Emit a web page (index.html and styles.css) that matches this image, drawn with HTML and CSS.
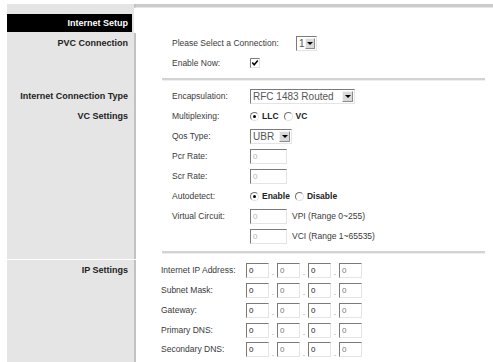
FILE: index.html
```html
<!DOCTYPE html>
<html lang="en">
<head>
  <meta charset="UTF-8">
  <title>Internet Setup</title>
  <link rel="stylesheet" href="styles.css">
</head>
<body>
  <div class="setup">
    <div class="row head">
      <div class="side"><div class="title-bar">Internet Setup</div></div>
      <div class="main top-line"></div>
    </div>

    <div class="row">
      <div class="side">PVC Connection</div>
      <div class="main">
        <span class="field wide">Please Select a Connection:</span>
        <span class="select sel-small"><span class="sel-text">1</span><span class="arrow"></span></span>
      </div>
    </div>
    <div class="row">
      <div class="side"></div>
      <div class="main">
        <span class="field">Enable Now:</span>
        <svg class="check" width="10" height="10" viewBox="0 0 10 10">
          <rect x="0.5" y="0.5" width="9" height="9" fill="#fff" stroke="#e2e2e2"/>
          <path d="M0.5 9.5 V0.5 H9.5" fill="none" stroke="#7a7a7a"/>
          <path d="M2.3 4.6 L4.2 6.8 L7.8 2.6" fill="none" stroke="#000" stroke-width="1.5"/>
        </svg>
      </div>
    </div>
    <div class="row sep">
      <div class="side"></div>
      <div class="main"><div class="line"></div></div>
    </div>

    <div class="row">
      <div class="side">Internet Connection Type</div>
      <div class="main">
        <span class="field">Encapsulation:</span>
        <span class="select sel-wide"><span class="sel-text">RFC 1483 Routed</span><span class="arrow"></span></span>
      </div>
    </div>
    <div class="row">
      <div class="side">VC Settings</div>
      <div class="main">
        <span class="field">Multiplexing:</span>
        <span class="radio on"></span><b class="opt">LLC</b>
        <span class="radio gap"></span><b class="opt">VC</b>
      </div>
    </div>
    <div class="row">
      <div class="side"></div>
      <div class="main">
        <span class="field">Qos Type:</span>
        <span class="select sel-mid"><span class="sel-text">UBR</span><span class="arrow"></span></span>
      </div>
    </div>
    <div class="row">
      <div class="side"></div>
      <div class="main">
        <span class="field">Pcr Rate:</span>
        <input class="box off" type="text" value="0" readonly>
      </div>
    </div>
    <div class="row">
      <div class="side"></div>
      <div class="main">
        <span class="field">Scr Rate:</span>
        <input class="box off" type="text" value="0" readonly>
      </div>
    </div>
    <div class="row">
      <div class="side"></div>
      <div class="main">
        <span class="field">Autodetect:</span>
        <span class="radio on"></span><b class="opt">Enable</b>
        <span class="radio gap"></span><b class="opt">Disable</b>
      </div>
    </div>
    <div class="row">
      <div class="side"></div>
      <div class="main">
        <span class="field">Virtual Circuit:</span>
        <input class="box off" type="text" value="0" readonly>
        <span class="note">VPI (Range 0~255)</span>
      </div>
    </div>
    <div class="row">
      <div class="side"></div>
      <div class="main">
        <span class="field"></span>
        <input class="box off" type="text" value="0" readonly>
        <span class="note">VCI (Range 1~65535)</span>
      </div>
    </div>
    <div class="row sep">
      <div class="side"></div>
      <div class="main"><div class="line"></div></div>
    </div>

    <div class="row ip">
      <div class="side">IP Settings</div>
      <div class="main">
        <span class="field">Internet IP Address:</span>
        <input class="oct" type="text" value="0"><span class="dot">.</span><input class="oct light" type="text" value="0"><span class="dot">.</span><input class="oct" type="text" value="0"><span class="dot">.</span><input class="oct light" type="text" value="0">
      </div>
    </div>
    <div class="row ip">
      <div class="side"></div>
      <div class="main">
        <span class="field">Subnet Mask:</span>
        <input class="oct" type="text" value="0"><span class="dot">.</span><input class="oct light" type="text" value="0"><span class="dot">.</span><input class="oct" type="text" value="0"><span class="dot">.</span><input class="oct light" type="text" value="0">
      </div>
    </div>
    <div class="row ip">
      <div class="side"></div>
      <div class="main">
        <span class="field">Gateway:</span>
        <input class="oct" type="text" value="0"><span class="dot">.</span><input class="oct light" type="text" value="0"><span class="dot">.</span><input class="oct" type="text" value="0"><span class="dot">.</span><input class="oct light" type="text" value="0">
      </div>
    </div>
    <div class="row ip">
      <div class="side"></div>
      <div class="main">
        <span class="field">Primary DNS:</span>
        <input class="oct" type="text" value="0"><span class="dot">.</span><input class="oct light" type="text" value="0"><span class="dot">.</span><input class="oct" type="text" value="0"><span class="dot">.</span><input class="oct light" type="text" value="0">
      </div>
    </div>
    <div class="row ip last">
      <div class="side"></div>
      <div class="main">
        <span class="field">Secondary DNS:</span>
        <input class="oct" type="text" value="0"><span class="dot">.</span><input class="oct light" type="text" value="0"><span class="dot">.</span><input class="oct" type="text" value="0"><span class="dot">.</span><input class="oct light" type="text" value="0">
      </div>
    </div>
  </div>
</body>
</html>
```

FILE: styles.css
```css
html, body {
  height: 100%;
  overflow: hidden;
}

body {
  margin: 0;
  background: #fff;
  font-family: "Liberation Sans", Arial, sans-serif;
  color: #3a3a3a;
}

.setup {
  margin-left: 7px;
  padding-top: 4px;
}

/* one label + content line */
.row {
  display: flex;
  height: 20px;
}

.side {
  width: 127px;
  box-sizing: border-box;
  padding-right: 6px;
  background: #e5e5e5;
  display: flex;
  align-items: center;
  justify-content: flex-end;
  font-size: 9px;
  font-weight: bold;
  color: #222;
}

.main {
  flex: 1;
  border-left: 2px solid #c2c2c2;
  display: flex;
  align-items: center;
  padding-left: 36px;
  font-size: 8.5px;
}

/* header row */
.head {
  height: 29px;
}

.head .side {
  display: block;
  padding: 10px 2px 1px 0;
}

.title-bar {
  height: 18px;
  background: #000;
  color: #fff;
  text-align: right;
  line-height: 18px;
  padding-right: 4px;
}

.top-line {
  align-self: flex-start;
  height: 3px;
  background: #cbcbcb;
  border-bottom: 1px solid #e6e6e6;
}

/* separators */
.sep {
  height: 13px;
}

.row.sep + .row.ip {
  margin-top: 1px;
}

.line {
  width: 323px;
  height: 2px;
  margin-left: -10px;
  background: #d3d3d3;
  border-bottom: 1px solid #eee;
}

/* last row runs to the bottom edge */
.row.last {
  height: 24px;
}

.row.last .main {
  align-items: flex-start;
  padding-top: 2px;
}

.field {
  width: 78px;
  flex-shrink: 0;
}

.field.wide {
  width: 124px;
}

.ip .main {
  padding-left: 25px;
}

.ip .field {
  width: 85px;
}

.row.last .field {
  line-height: 15px;
}

/* fake windows select */
.select {
  display: inline-flex;
  align-items: center;
  box-sizing: border-box;
  height: 15px;
  border: 1px solid;
  border-color: #7a7a7a #e4e4e4 #e4e4e4 #7a7a7a;
  background: #fff;
  padding-left: 2px;
  font-size: 10px;
  color: #555;
}

.sel-small { width: 21px; }
.sel-mid { width: 42px; }
.sel-wide { width: 105px; }

.sel-text {
  flex: 1;
  white-space: nowrap;
}

.arrow {
  width: 11px;
  height: 11px;
  box-sizing: border-box;
  margin-right: 1px;
  background: #d9d9d9;
  border: 1px solid;
  border-color: #f4f4f4 #8a8a8a #8a8a8a #f4f4f4;
  display: flex;
  align-items: center;
  justify-content: center;
}

.arrow::after {
  content: "";
  border-left: 3px solid transparent;
  border-right: 3px solid transparent;
  border-top: 3px solid #000;
}

.check {
  display: block;
}

/* radio buttons */
.radio {
  width: 9px;
  height: 9px;
  box-sizing: border-box;
  border-radius: 50%;
  border: 1px solid;
  border-color: #6f6f6f #e2e2e2 #e2e2e2 #6f6f6f;
  background: #fff;
  position: relative;
  flex-shrink: 0;
}

.radio.on::after {
  content: "";
  position: absolute;
  left: 2px;
  top: 2px;
  width: 3px;
  height: 3px;
  border-radius: 50%;
  background: #000;
}

.radio.gap {
  margin-left: 5px;
}

.opt {
  margin-left: 3px;
  font-size: 8.5px;
  color: #222;
}

/* text boxes */
.box,
.oct {
  box-sizing: border-box;
  height: 15px;
  margin: 0;
  border: 1px solid;
  border-color: #7a7a7a #e4e4e4 #e4e4e4 #7a7a7a;
  background: #fff;
  padding: 0 2px;
  font-family: "Liberation Sans", Arial, sans-serif;
  font-size: 8px;
  outline: none;
}

.box {
  width: 37px;
}

.off {
  color: #b0b0b0;
}

.note {
  margin-left: 5px;
  white-space: nowrap;
}

.oct {
  width: 23px;
  color: #222;
}

.oct.light {
  color: #777;
}

.dot {
  width: 8px;
  text-align: center;
  align-self: flex-end;
  padding-bottom: 3px;
  color: #999;
}

.row.last .dot {
  align-self: flex-start;
  padding: 6px 0 0;
}
```
